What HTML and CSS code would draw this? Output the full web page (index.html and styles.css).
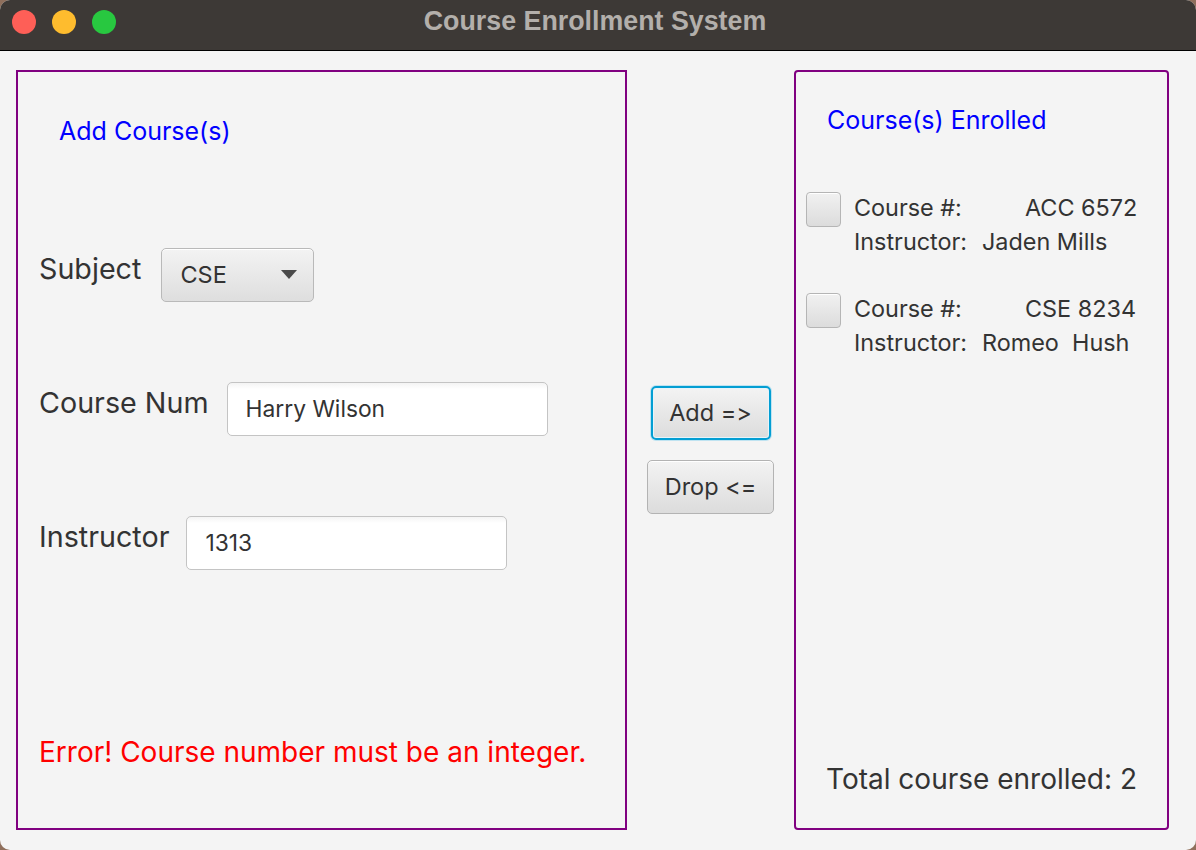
FILE: index.html
```html
<!DOCTYPE html>
<html>
<head>
<meta charset="utf-8">
<link rel="stylesheet" href="styles.css">
</head>
<body>
<div class="window">
  <div class="titlebar">
    <div class="lights">
      <span class="light red"></span>
      <span class="light yellow"></span>
      <span class="light green"></span>
    </div>
    <div class="wintitle">Course Enrollment System</div>
  </div>
  <div class="content">
    <div class="panel left">
      <div class="ptitle ltitle">Add Course(s)</div>
      <div class="row subject-row">
        <div class="label">Subject</div>
        <div class="combo"><span class="combo-text">CSE</span><span class="arrow"></span></div>
      </div>
      <div class="row num-row">
        <div class="label">Course Num</div>
        <div class="field">Harry Wilson</div>
      </div>
      <div class="row inst-row">
        <div class="label">Instructor</div>
        <div class="field">1313</div>
      </div>
      <div class="error">Error! Course number must be an integer.</div>
    </div>
    <div class="middle">
      <div class="btn btn-add">Add =&gt;</div>
      <div class="btn btn-drop">Drop &lt;=</div>
    </div>
    <div class="panel right">
      <div class="ptitle rtitle">Course(s) Enrolled</div>
      <div class="course first">
        <div class="check"></div>
        <div class="info">
          <div class="line"><span class="k k1">Course #:</span><span class="v">ACC 6572</span></div>
          <div class="line"><span class="k k2">Instructor:</span><span class="v">Jaden Mills</span></div>
        </div>
      </div>
      <div class="course second">
        <div class="check"></div>
        <div class="info">
          <div class="line"><span class="k k1">Course #:</span><span class="v">CSE 8234</span></div>
          <div class="line"><span class="k k2">Instructor:</span><span class="v">Romeo&nbsp; Hush</span></div>
        </div>
      </div>
      <div class="total">Total course enrolled: 2</div>
    </div>
  </div>
</div>
</body>
</html>
```

FILE: styles.css
```css
* { box-sizing: border-box; }
html, body { margin: 0; padding: 0; }
body {
  width: 1196px;
  height: 850px;
  background: #8f6f5c;
  font-family: "Inter", "Noto Sans", sans-serif;
  font-feature-settings: "calt" 0, "liga" 0;
  font-variant-ligatures: none;
  color: #333333;
  overflow: hidden;
}
.window {
  width: 1196px;
  height: 850px;
  border-radius: 10px;
  overflow: hidden;
  background: #f4f4f4;
  display: flex;
  flex-direction: column;
}
.titlebar {
  height: 51px;
  flex: none;
  background: #3d3936;
  border-bottom: 1px solid #000;
  display: flex;
  align-items: flex-start;
  position: relative;
}
.lights {
  display: flex;
  gap: 16px;
  padding: 10px 0 0 12px;
}
.light {
  width: 24px;
  height: 24px;
  border-radius: 50%;
  display: block;
}
.red { background: #fe5f57; }
.yellow { background: #febc2e; }
.green { background: #28c840; }
.wintitle {
  position: absolute;
  left: 0;
  right: 6px;
  top: 0;
  text-align: center;
  font-family: "Liberation Sans", Arial, sans-serif;
  font-weight: bold;
  font-size: 26.8px;
  line-height: 42px;
  color: #b3afab;
}
.content {
  flex: 1;
  display: flex;
  padding: 19px 27px 20px 16px;
}
.panel {
  border: 2px solid #800080;
  height: 760px;
  display: flex;
  flex-direction: column;
}
.left {
  width: 611px;
  padding: 0 21px;
}
.right {
  width: 375px;
  border-radius: 4px;
  padding: 0 0 0 10px;
}
.ptitle {
  color: #0000ff;
  font-size: 25px;
  line-height: 30px;
}
.ltitle {
  margin: 44px 0 0 20px;
}
.rtitle {
  margin: 33px 0 0 21px;
}
.row {
  display: flex;
  align-items: center;
  height: 54px;
}
.subject-row { margin-top: 102px; gap: 20px; }
.num-row { margin-top: 80px; gap: 18px; }
.inst-row { margin-top: 80px; gap: 17px; }
.label {
  font-size: 28.7px;
  line-height: 34px;
  margin-bottom: 12px;
}
.combo {
  width: 153px;
  height: 54px;
  border: 1px solid #b9b9b9;
  border-radius: 5px;
  background: linear-gradient(#f3f3f3, #dedede);
  box-shadow: inset 0 1px 0 #ffffff;
  display: flex;
  align-items: center;
  justify-content: space-between;
  padding: 0 16px 0 18px;
}
.combo-text {
  font-size: 23.5px;
  line-height: 30px;
}
.arrow {
  width: 0;
  height: 0;
  border-left: 8px solid transparent;
  border-right: 8px solid transparent;
  border-top: 9px solid #4a4a4a;
  margin-bottom: 2px;
}
.field {
  width: 321px;
  height: 54px;
  border: 1px solid #c4c4c4;
  border-radius: 5px;
  background: linear-gradient(#f4f4f4 0, #ffffff 6px, #ffffff 100%);
  font-size: 22.8px;
  line-height: 52px;
  padding-left: 18px;
}
.error {
  margin-top: 165px;
  color: #ff0000;
  font-size: 28px;
  line-height: 34px;
}
.middle {
  flex: 1;
  display: flex;
  flex-direction: column;
  align-items: center;
  justify-content: center;
  gap: 20px;
}
.btn {
  height: 54px;
  border: 1px solid #b3b3b3;
  border-radius: 5px;
  background: linear-gradient(#f3f3f3, #dcdcdc);
  box-shadow: inset 0 1px 0 #ffffff;
  font-size: 23.5px;
  line-height: 52px;
  text-align: center;
}
.btn-add {
  width: 120px;
  border: 2px solid #039ed3;
  line-height: 50px;
  box-shadow: 0 0 0 1px #bfe3f1, inset 0 0 0 1px #e6f4fa;
}
.btn-drop {
  width: 127px;
}
.course {
  display: flex;
  gap: 13px;
}
.course.first { margin-top: 56px; }
.course.second { margin-top: 33px; }
.check {
  width: 35px;
  height: 35px;
  flex: none;
  margin-top: 1px;
  border: 1px solid #b5b5b5;
  border-radius: 4px;
  background: linear-gradient(#f1f1f1, #dcdcdc);
  box-shadow: inset 0 1px 0 #ffffff;
}
.info {
  font-size: 23.4px;
  line-height: 34px;
}
.line { display: flex; }
.k { display: block; flex: none; }
.k1 { width: 171px; }
.k2 { width: 128px; }
.total {
  margin-top: auto;
  margin-bottom: 32px;
  text-align: center;
  font-size: 28px;
  line-height: 34px;
  padding-right: 10px;
}
```
